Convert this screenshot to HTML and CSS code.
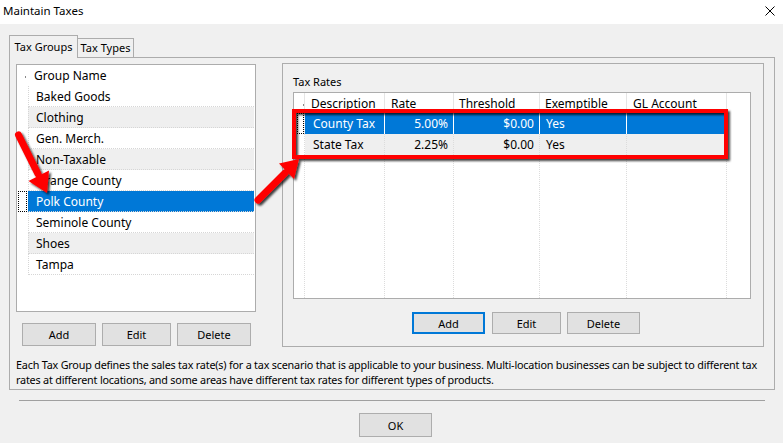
FILE: index.html
```html
<!DOCTYPE html>
<html>
<head>
<meta charset="utf-8">
<link rel="stylesheet" href="styles.css">
</head>
<body>
<div class="window">
  <div class="titlebar">
    <span class="title">Maintain Taxes</span>
    <svg class="close" width="10" height="10" viewBox="0 0 10 10"><path d="M0.5 0.5L9.5 9.5M9.5 0.5L0.5 9.5" stroke="#000" stroke-width="1" fill="none"/></svg>
  </div>
  <div class="body">
    <div class="tabs">
      <div class="tab active">Tax Groups</div>
      <div class="tab">Tax Types</div>
    </div>
    <div class="panel">
      <div class="top">
        <div class="left">
          <div class="list">
            <div class="list-head"><span class="tick"></span>Group Name</div>
            <div class="lrow"><span class="ind"></span><span class="cell">Baked Goods</span></div>
            <div class="lrow alt"><span class="ind"></span><span class="cell">Clothing</span></div>
            <div class="lrow"><span class="ind"></span><span class="cell">Gen. Merch.</span></div>
            <div class="lrow alt"><span class="ind"></span><span class="cell">Non-Taxable</span></div>
            <div class="lrow"><span class="ind"></span><span class="cell">Orange County</span></div>
            <div class="lrow sel"><span class="ind"><i class="focus"></i></span><span class="cell">Polk County</span></div>
            <div class="lrow"><span class="ind"></span><span class="cell">Seminole County</span></div>
            <div class="lrow alt"><span class="ind"></span><span class="cell">Shoes</span></div>
            <div class="lrow"><span class="ind"></span><span class="cell">Tampa</span></div>
          </div>
          <div class="btns lbtns">
            <button class="btn w74">Add</button>
            <button class="btn w69">Edit</button>
            <button class="btn w74">Delete</button>
          </div>
        </div>
        <div class="group">
          <div class="glabel">Tax Rates</div>
          <div class="grid">
            <div class="grow ghead">
              <span class="c ci"><span class="tick2"></span></span>
              <span class="c cd">Description</span>
              <span class="c cr">Rate</span>
              <span class="c ct">Threshold</span>
              <span class="c ce">Exemptible</span>
              <span class="c cg">GL Account</span>
            </div>
            <div class="grow gbody sel">
              <span class="c ci"><i class="focus2"></i></span>
              <span class="c cd">County Tax</span>
              <span class="c cr num">5.00%</span>
              <span class="c ct num">$0.00</span>
              <span class="c ce">Yes</span>
              <span class="c cg"></span>
            </div>
            <div class="grow gbody alt">
              <span class="c ci"></span>
              <span class="c cd">State Tax</span>
              <span class="c cr num">2.25%</span>
              <span class="c ct num">$0.00</span>
              <span class="c ce">Yes</span>
              <span class="c cg"></span>
            </div>
            <div class="grow gfill">
              <span class="c ci"></span>
              <span class="c cd"></span>
              <span class="c cr"></span>
              <span class="c ct"></span>
              <span class="c ce"></span>
              <span class="c cg"></span>
            </div>
          </div>
          <div class="btns rbtns">
            <button class="btn h22 w73 default">Add</button>
            <button class="btn h22 w69">Edit</button>
            <button class="btn h22 w73">Delete</button>
          </div>
        </div>
      </div>
      <p class="desc"><span>Each Tax Group defines the sales tax rate(s) for a tax scenario that is applicable to your business. Multi-location businesses can be subject to different tax</span><span>rates at different locations, and some areas have different tax rates for different types of products.</span></p>
    </div>
    <div class="sep"></div>
    <div class="okrow"><button class="btn ok">OK</button></div>
  </div>
  <svg class="annot" width="783" height="443" viewBox="0 0 783 443">
    <defs>
      <filter id="sh" x="-20%" y="-20%" width="140%" height="140%">
        <feDropShadow dx="2" dy="2" stdDeviation="1.3" flood-color="#000" flood-opacity="0.75"/>
      </filter>
    </defs>
    <g filter="url(#sh)">
      <rect x="294" y="111" width="432" height="46" fill="none" stroke="#ff0000" stroke-width="4"/>
      <line x1="18.5" y1="135" x2="38" y2="174" stroke="#ff0000" stroke-width="7" stroke-linecap="round"/>
      <polygon points="28.5,181 47,193 49,170.5" fill="#ff0000"/>
      <line x1="258" y1="200" x2="285" y2="173" stroke="#ff0000" stroke-width="7" stroke-linecap="round"/>
      <polygon points="279,163.5 299,159 294,179" fill="#ff0000"/>
    </g>
  </svg>
</div>
</body>
</html>
```
FILE: styles.css
```css
* { box-sizing: border-box; }
body {
  margin: 0;
  background: #f0f0f0;
  font-family: "Noto Sans", "Liberation Sans", sans-serif;
  font-size: 11px;
  color: #000;
}
.window { position: relative; width: 783px; height: 443px; overflow: hidden; }
.titlebar {
  height: 24px;
  background: #fff;
  display: flex;
  align-items: center;
  justify-content: space-between;
  padding: 0 8px 2px 3px;
}
.title { font-size: 11.5px; line-height: 16px; }
.close { display: block; }
.body { padding: 11px 8px 0 9px; }
.tabs { display: flex; align-items: flex-end; height: 22px; }
.tab {
  border: 1px solid #acacac;
  border-bottom: none;
  text-align: center;
  font-size: 11px;
  background: #f0f0f0;
}
.tab.active {
  width: 69px;
  height: 23px;
  margin-bottom: -1px;
  line-height: 21px;
  position: relative;
  z-index: 1;
}
.tab:not(.active) {
  width: 57px;
  height: 19px;
  margin-left: -1px;
  line-height: 18px;
}
.panel {
  border: 1px solid #acacac;
  height: 333px;
  padding: 5px 10px 0 6px;
}
.top { display: flex; gap: 26px; }
.left { width: 240px; }
.list {
  margin-top: 1px;
  height: 248px;
  border: 1px solid #acacac;
  background: #fff;
  font-size: 12px;
}
.list-head {
  height: 21px;
  line-height: 22px;
  padding-left: 17px;
  position: relative;
}
.tick {
  position: absolute;
  left: 8px;
  top: 11px;
  width: 1px;
  height: 2px;
  background: #888;
}
.lrow { display: flex; height: 21px; }
.ind { width: 11px; position: relative; }
.cell {
  width: 226px;
  border-left: 1px dotted #d6d6d6;
  border-bottom: 1px dotted #d6d6d6;
  padding-left: 7px;
  line-height: 21px;
  white-space: nowrap;
}
.lrow.alt .cell { background: #efefef; }
.lrow.sel .cell { background: #0078d7; color: #fff; border-left-color: #0078d7; }
.focus {
  position: absolute;
  left: 1px;
  top: 0;
  width: 9px;
  height: 21px;
  border: 1px dotted #000;
}
.btns { display: flex; }
.btn {
  font-family: inherit;
  font-size: 11px;
  color: #000;
  background: #e1e1e1;
  border: 1px solid #adadad;
  height: 23px;
  padding: 0;
  margin: 0;
}
.h22 { height: 22px; }
.w74 { width: 74px; }
.w73 { width: 73px; }
.w69 { width: 69px; }
.lbtns { margin-top: 11px; margin-left: 6px; gap: 6px; }
.group {
  width: 482px;
  height: 284px;
  border: 1px solid #acacac;
}
.glabel {
  margin: 10px 0 0 10px;
  line-height: 15px;
  font-size: 11px;
}
.grid {
  margin: 3px 0 0 10px;
  width: 458px;
  height: 207px;
  border: 1px solid #acacac;
  background: #fff;
  display: flex;
  flex-direction: column;
  font-size: 12px;
}
.grow { display: flex; }
.ghead { height: 20px; line-height: 21px; }
.gbody { height: 21px; line-height: 22px; }
.gfill { flex: 1; }
.c { display: block; flex: none; white-space: nowrap; position: relative; }
.ci { width: 11px; }
.cd { width: 80px; padding-left: 6px; }
.cr { width: 69px; padding-left: 6px; }
.ct { width: 86px; padding-left: 5px; }
.ce { width: 87px; padding-left: 5px; }
.cg { width: 100px; padding-left: 6px; }
.ghead .c { border-right: 1px solid #e5e5e5; }
.gbody .c, .gfill .c { border-right: 1px dotted #dcdcdc; }
.gbody .cd { padding-left: 8px; }
.gbody .ce { padding-left: 6px; }
.gbody .num { text-align: right; padding-left: 0; padding-right: 5px; }
.gbody.sel .c:not(.ci) { background: #0078d7; color: #fff; border-right: 1px solid #fff; }
.gbody.sel .cg { border-right-color: #0078d7; }
.gbody.alt .c:not(.ci) { background: #efefef; }
.tick2 {
  position: absolute;
  left: 9px;
  top: 11px;
  width: 1px;
  height: 2px;
  background: #888;
}
.focus2 {
  position: absolute;
  left: 3px;
  top: 0;
  width: 7px;
  height: 21px;
  border: 1px dotted #000;
}
.rbtns { margin: 13px 0 0 129px; gap: 7px; }
.rbtns .btn + .btn + .btn { margin-left: -1px; }
.btn.default { border: 2px solid #0078d7; }
.desc {
  margin: 10px 0 0 0;
  font-size: 10.8px;
  letter-spacing: -0.2px;
  line-height: 15px;
}
.desc span { display: block; white-space: nowrap; }
.sep {
  height: 1px;
  background: #a0a0a0;
  margin: 10px 10px 0 10px;
}
.okrow { margin-top: 12px; padding-left: 350px; }
.btn.ok { width: 73px; height: 24px; }
.annot { position: absolute; left: 0; top: 0; pointer-events: none; }
```
